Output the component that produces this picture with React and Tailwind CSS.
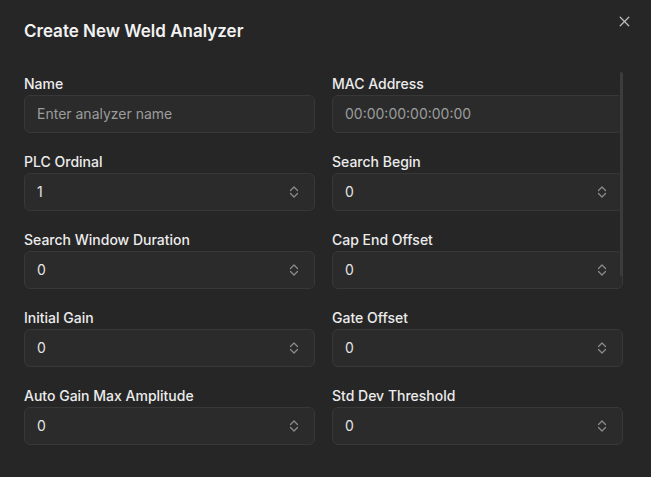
import React from 'react'
import { X } from 'lucide-react'

const fields = [
  { label: 'Name', placeholder: 'Enter analyzer name' },
  { label: 'MAC Address', placeholder: '00:00:00:00:00:00' },
  { label: 'PLC Ordinal', value: '1', number: true },
  { label: 'Search Begin', value: '0', number: true },
  { label: 'Search Window Duration', value: '0', number: true },
  { label: 'Cap End Offset', value: '0', number: true },
  { label: 'Initial Gain', value: '0', number: true },
  { label: 'Gate Offset', value: '0', number: true },
  { label: 'Auto Gain Max Amplitude', value: '0', number: true },
  { label: 'Std Dev Threshold', value: '0', number: true },
]

const Spinner = () => (
  <svg width="10" height="14" viewBox="0 0 10 14" fill="none" stroke="#8b8b8b" strokeWidth="1.3" strokeLinecap="round" strokeLinejoin="round">
    <path d="M1.5 5.5 L5 2 L8.5 5.5" />
    <path d="M1.5 8.5 L5 12 L8.5 8.5" />
  </svg>
)

const Field = ({ field }) => (
  <div className="flex flex-col">
    <label className="text-sm font-medium leading-5 text-[#ececec]">{field.label}</label>
    <div className="mt-[1px] flex h-[38px] items-center rounded-md border border-[#383838] bg-[#2b2b2b] pl-3 pr-[15px]">
      <input
        type="text"
        readOnly
        value={field.value || ''}
        placeholder={field.placeholder}
        className="min-w-0 flex-1 bg-transparent text-sm leading-5 text-[#e4e4e4] placeholder-[#9c9c9c] outline-none"
      />
      {field.number && <Spinner />}
    </div>
  </div>
)

const App = () => {
  return (
    <div className="relative h-[477px] w-[651px] overflow-hidden bg-[#262626]" style={{ fontFamily: 'Inter, "Noto Sans", sans-serif' }}>
      {/* Header */}
      <div className="flex items-start justify-between pl-6 pr-[18px] pt-[17px]">
        <h2 className="text-[17px] font-semibold leading-7 text-[#f2f2f2]">Create New Weld Analyzer</h2>
        <button className="mt-[-4px] text-[#bdbdbd]">
          <X size={17} strokeWidth={1.8} />
        </button>
      </div>

      {/* Form */}
      <div className="relative mt-[29px] w-[623px] pl-6">
        <div className="grid grid-cols-2 gap-x-[17px] gap-y-[19px]">
          {fields.map(f => (
            <Field key={f.label} field={f} />
          ))}
        </div>
        {/* scrollbar thumb */}
        <div className="absolute right-0 top-[-2px] h-[204px] w-[3px] rounded-full bg-[#3c3c3c]" />
      </div>
    </div>
  )
}

export default App
